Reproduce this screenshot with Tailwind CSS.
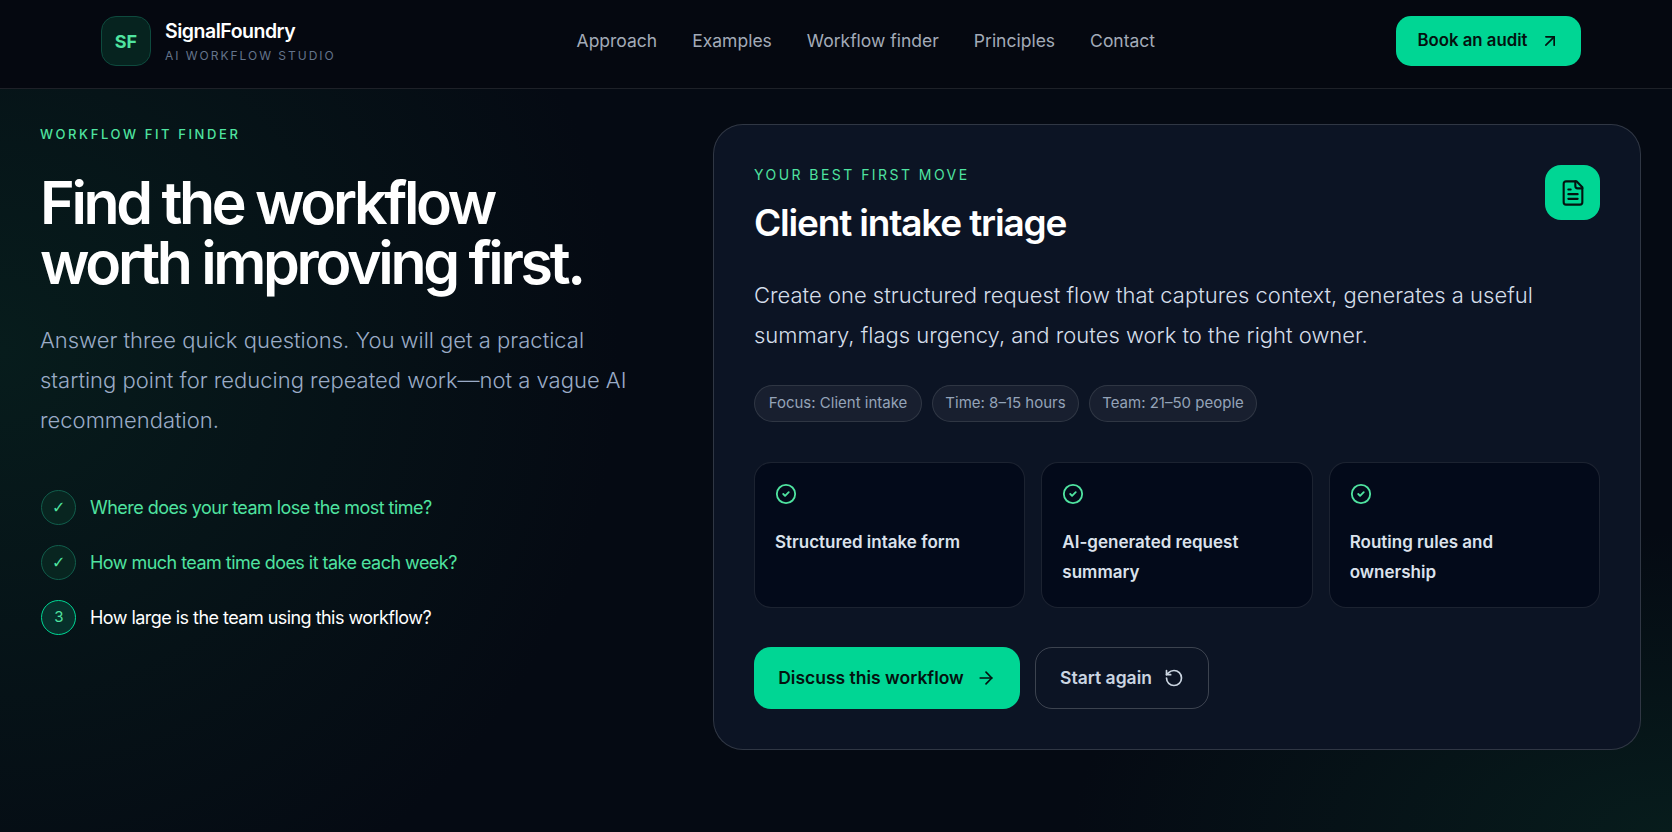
<!DOCTYPE html>
<html lang="en">
<head>
  <meta charset="UTF-8" />
  <title>SignalFoundry</title>
  <script src="https://cdn.jsdelivr.net/npm/@tailwindcss/browser@4"></script>
</head>
<body class="h-[832px] overflow-hidden bg-[#050a13] font-['Inter',sans-serif] text-white">
  <div class="h-[832px] bg-[radial-gradient(620px_620px_at_0px_350px,#071c1c_0%,#050a13_100%),radial-gradient(600px_300px_at_1672px_832px,#071c1c_0%,#050a13_100%)] bg-blend-lighten">

    <!-- Header -->
    <header class="flex h-[89px] items-center justify-between border-b border-white/10 bg-[#050810] pt-[16px] pb-[22px] pl-[101px] pr-[91px]">
      <div class="flex items-center gap-[14px]">
        <div class="flex h-[50px] w-[50px] items-center justify-center rounded-[15px] border border-[#0e4a3e] bg-[#06231f] text-[18px] font-bold text-[#4fe3a0]">SF</div>
        <div>
          <div class="text-[19.5px] leading-[28px] font-semibold tracking-[-0.025em]">SignalFoundry</div>
          <div class="mt-[2px] text-[12px] leading-[18px] tracking-[0.165em] text-[#64748b]">AI WORKFLOW STUDIO</div>
        </div>
      </div>
      <nav class="flex gap-[35px] text-[17.5px] text-[#a3abb8]">
        <a>Approach</a>
        <a>Examples</a>
        <a>Workflow finder</a>
        <a>Principles</a>
        <a>Contact</a>
      </nav>
      <a class="flex h-[50px] w-[185px] items-center justify-center gap-[12px] rounded-[15px] bg-[#00d694] text-[16.8px] font-semibold text-[#04120f]">
        Book an audit
        <svg class="h-[20px] w-[20px]" viewBox="0 0 24 24" fill="none" stroke="currentColor" stroke-width="2" stroke-linecap="round" stroke-linejoin="round"><path d="M7 7h10v10" /><path d="M7 17 17 7" /></svg>
      </a>
    </header>

    <main class="grid grid-cols-[673px_928px] pl-[40px] pt-[35px]">
      <!-- Left column -->
      <section>
        <div class="text-[13px] leading-[20px] font-medium tracking-[0.2em] text-[#4fe3a0]">WORKFLOW FIT FINDER</div>
        <h1 class="mt-[29px] text-[59px] leading-[60px] font-semibold tracking-[-0.056em]">Find the workflow<br />worth improving first.</h1>
        <p class="mt-[27px] w-[600px] text-[22px] leading-[40px] font-light text-[#9aabc6]">Answer three quick questions. You will get a practical starting point for reducing repeated work—not a vague AI recommendation.</p>
        <ul class="mt-[50px] flex flex-col gap-[20px] pl-[1px] text-[18px] tracking-[-0.03em]">
          <li class="flex h-[35px] items-center gap-[14px] text-[#4fe3a0]">
            <span class="flex h-[35px] w-[35px] items-center justify-center rounded-full border border-[#115e4c] bg-[#082520] font-['DejaVu_Sans',sans-serif] text-[16px]">✓</span>
            Where does your team lose the most time?
          </li>
          <li class="flex h-[35px] items-center gap-[14px] text-[#4fe3a0]">
            <span class="flex h-[35px] w-[35px] items-center justify-center rounded-full border border-[#115e4c] bg-[#082520] font-['DejaVu_Sans',sans-serif] text-[16px]">✓</span>
            How much team time does it take each week?
          </li>
          <li class="flex h-[35px] items-center gap-[14px] text-white">
            <span class="flex h-[35px] w-[35px] items-center justify-center rounded-full border border-[#00d694] bg-[#07302b] text-[15px] text-[#4fe3a0]">3</span>
            How large is the team using this workflow?
          </li>
        </ul>
      </section>

      <!-- Result card -->
      <section class="h-[626px] rounded-[30px] border border-white/15 bg-[#0c1424] p-[40px]">
        <div class="flex items-start justify-between">
          <div>
            <div class="text-[14px] leading-[20px] tracking-[0.175em] text-[#4fe3a0]">YOUR BEST FIRST MOVE</div>
            <h2 class="mt-[14px] text-[37px] leading-[48px] font-semibold tracking-[-0.032em]">Client intake triage</h2>
          </div>
          <div class="flex h-[55px] w-[55px] items-center justify-center rounded-[16px] bg-[#00d694] text-[#04120f]">
            <svg class="h-[28px] w-[28px]" viewBox="0 0 24 24" fill="none" stroke="currentColor" stroke-width="1.8" stroke-linecap="round" stroke-linejoin="round"><path d="M15 2H6a2 2 0 0 0-2 2v16a2 2 0 0 0 2 2h12a2 2 0 0 0 2-2V7Z" /><path d="M14 2v4a2 2 0 0 0 2 2h4" /><path d="M10 9H8" /><path d="M16 13H8" /><path d="M16 17H8" /></svg>
          </div>
        </div>
        <p class="mt-[28px] text-[22px] leading-[40px] font-light text-[#d5deea]">Create one structured request flow that captures context, generates a useful summary, flags urgency, and routes work to the right owner.</p>
        <div class="mt-[30px] flex gap-[10px] text-[15px] text-[#94a3b8]">
          <span class="flex h-[37px] w-[168px] items-center justify-center rounded-full border border-white/10 bg-white/5">Focus: Client intake</span>
          <span class="flex h-[37px] w-[147px] items-center justify-center rounded-full border border-white/10 bg-white/5">Time: 8–15 hours</span>
          <span class="flex h-[37px] w-[168px] items-center justify-center rounded-full border border-white/10 bg-white/5">Team: 21–50 people</span>
        </div>
        <div class="mt-[40px] grid h-[144px] grid-cols-3 gap-[16px]">
          <div class="rounded-[17px] border border-white/10 bg-[#030a1a] p-[20px]">
            <svg class="h-[22px] w-[22px] text-[#4fe3a0]" viewBox="0 0 24 24" fill="none" stroke="currentColor" stroke-width="2" stroke-linecap="round" stroke-linejoin="round"><circle cx="12" cy="12" r="10" /><path d="m9 12 2 2 4-4" /></svg>
            <div class="mt-[22px] text-[17px] leading-[30px] font-semibold text-[#dbe2ec]">Structured intake form</div>
          </div>
          <div class="rounded-[17px] border border-white/10 bg-[#030a1a] p-[20px]">
            <svg class="h-[22px] w-[22px] text-[#4fe3a0]" viewBox="0 0 24 24" fill="none" stroke="currentColor" stroke-width="2" stroke-linecap="round" stroke-linejoin="round"><circle cx="12" cy="12" r="10" /><path d="m9 12 2 2 4-4" /></svg>
            <div class="mt-[22px] text-[17px] leading-[30px] font-semibold text-[#dbe2ec]">AI-generated request summary</div>
          </div>
          <div class="rounded-[17px] border border-white/10 bg-[#030a1a] p-[20px]">
            <svg class="h-[22px] w-[22px] text-[#4fe3a0]" viewBox="0 0 24 24" fill="none" stroke="currentColor" stroke-width="2" stroke-linecap="round" stroke-linejoin="round"><circle cx="12" cy="12" r="10" /><path d="m9 12 2 2 4-4" /></svg>
            <div class="mt-[22px] text-[17px] leading-[30px] font-semibold text-[#dbe2ec]">Routing rules and ownership</div>
          </div>
        </div>
        <div class="mt-[41px] flex gap-[15px] text-[17.5px] font-semibold">
          <a class="flex h-[62px] w-[266px] items-center justify-center gap-[12px] rounded-[17px] bg-[#00d694] text-[#04120f]">
            Discuss this workflow
            <svg class="h-[20px] w-[20px]" viewBox="0 0 24 24" fill="none" stroke="currentColor" stroke-width="2" stroke-linecap="round" stroke-linejoin="round"><path d="M5 12h14" /><path d="m12 5 7 7-7 7" /></svg>
          </a>
          <a class="flex h-[62px] w-[174px] items-center justify-center gap-[12px] rounded-[17px] border border-white/20 text-[#cbd5e1]">
            Start again
            <svg class="h-[20px] w-[20px]" viewBox="0 0 24 24" fill="none" stroke="currentColor" stroke-width="2" stroke-linecap="round" stroke-linejoin="round"><path d="M3 12a9 9 0 1 0 9-9 9.75 9.75 0 0 0-6.74 2.74L3 8" /><path d="M3 3v5h5" /></svg>
          </a>
        </div>
      </section>
    </main>
  </div>
</body>
</html>
